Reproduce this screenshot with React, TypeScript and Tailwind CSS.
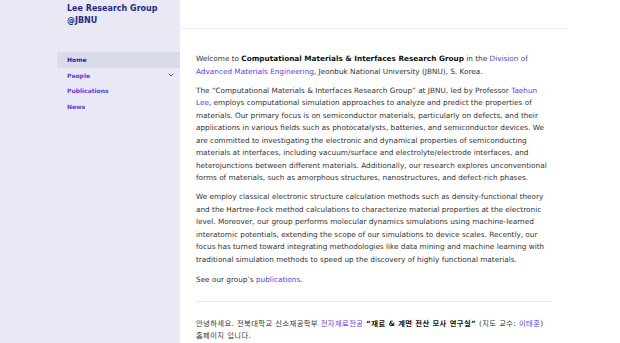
import React from "react";

const A = ({ children }: { children: React.ReactNode }) => (
  <a className="text-[#5b3df0]" href="#">{children}</a>
);

export default function App() {
  return (
    <div
      className="min-h-[343px] w-[620px] overflow-hidden bg-[linear-gradient(to_right,#e8e9f4_180px,#ffffff_180px)] text-[#333333]"
      style={{ fontFamily: '"DejaVu Sans", "Noto Sans CJK KR", sans-serif' }}
    >
      <div className="ml-[50px] w-[518px]">
        <header className="h-[29px] border-b border-[#eeeef2] pl-[17px] pt-[3px]">
          <div className="text-[8px] leading-[11.5px] font-semibold text-[#252b82]">
            Lee Research Group
            <br />
            @JBNU
          </div>
        </header>
        <div className="flex">
          <nav className="mt-[23px] ml-[7px] w-[123px] text-[6px] font-semibold text-[#5b3df0]">
            <div className="flex h-[15.5px] items-center bg-[#dadcec] pl-[10px] font-bold text-[#2b19c8]">Home</div>
            <div className="flex h-[15.5px] items-center justify-between pl-[10px] pr-[6px]">
              <span>People</span>
              <svg width="6" height="4" viewBox="0 0 6 4" fill="none" stroke="#5b3df0" strokeWidth="1">
                <path d="M0.8 0.8 L3 3 L5.2 0.8" />
              </svg>
            </div>
            <div className="flex h-[15.5px] items-center pl-[10px]">Publications</div>
            <div className="flex h-[15.5px] items-center pl-[10px]">News</div>
          </nav>
          <main className="ml-[16px] mt-[24px] w-[356px] text-[7.3px] leading-[12.5px]">
            <p className="mb-[6.5px]">
              Welcome to <b className="text-[#111]">Computational Materials &amp; Interfaces Research Group</b> in the{" "}
              <A>Division of Advanced Materials Engineering</A>, Jeonbuk National University (JBNU), S. Korea.
            </p>
            <p className="mb-[6.5px]">
              The “Computational Materials &amp; Interfaces Research Group” at JBNU, led by Professor <A>Taehun Lee</A>,
              employs computational simulation approaches to analyze and predict the properties of materials. Our
              primary focus is on semiconductor materials, particularly on defects, and their applications in various
              fields such as photocatalysts, batteries, and semiconductor devices. We are committed to investigating the
              electronic and dynamical properties of semiconducting materials at interfaces, including vacuum/surface
              and electrolyte/electrode interfaces, and heterojunctions between different materials. Additionally, our
              research explores unconventional forms of materials, such as amorphous structures, nanostructures, and
              defect-rich phases.
            </p>
            <p className="mb-[8px]">
              We employ classical electronic structure calculation methods such as density-functional theory and the
              Hartree-Fock method calculations to characterize material properties at the electronic level. Moreover,
              our group performs molecular dynamics simulations using machine-learned interatomic potentials, extending
              the scope of our simulations to device scales. Recently, our focus has turned toward integrating
              methodologies like data mining and machine learning with traditional simulation methods to speed up the
              discovery of highly functional materials.
            </p>
            <p>
              See our group’s <A>publications</A>.
            </p>
            <hr className="mt-[14px] mb-[16px] border-t border-[#ebebee]" />
            <p className="break-keep tracking-[0.4px]">
              안녕하세요. 전북대학교 신소재공학부 <A>전자재료전공</A>{" "}
              <b className="text-[#111]">“재료 &amp; 계면 전산 모사 연구실”</b> (지도 교수: <A>이태훈</A>) 홈페이지
              입니다.
            </p>
          </main>
        </div>
      </div>
    </div>
  );
}
